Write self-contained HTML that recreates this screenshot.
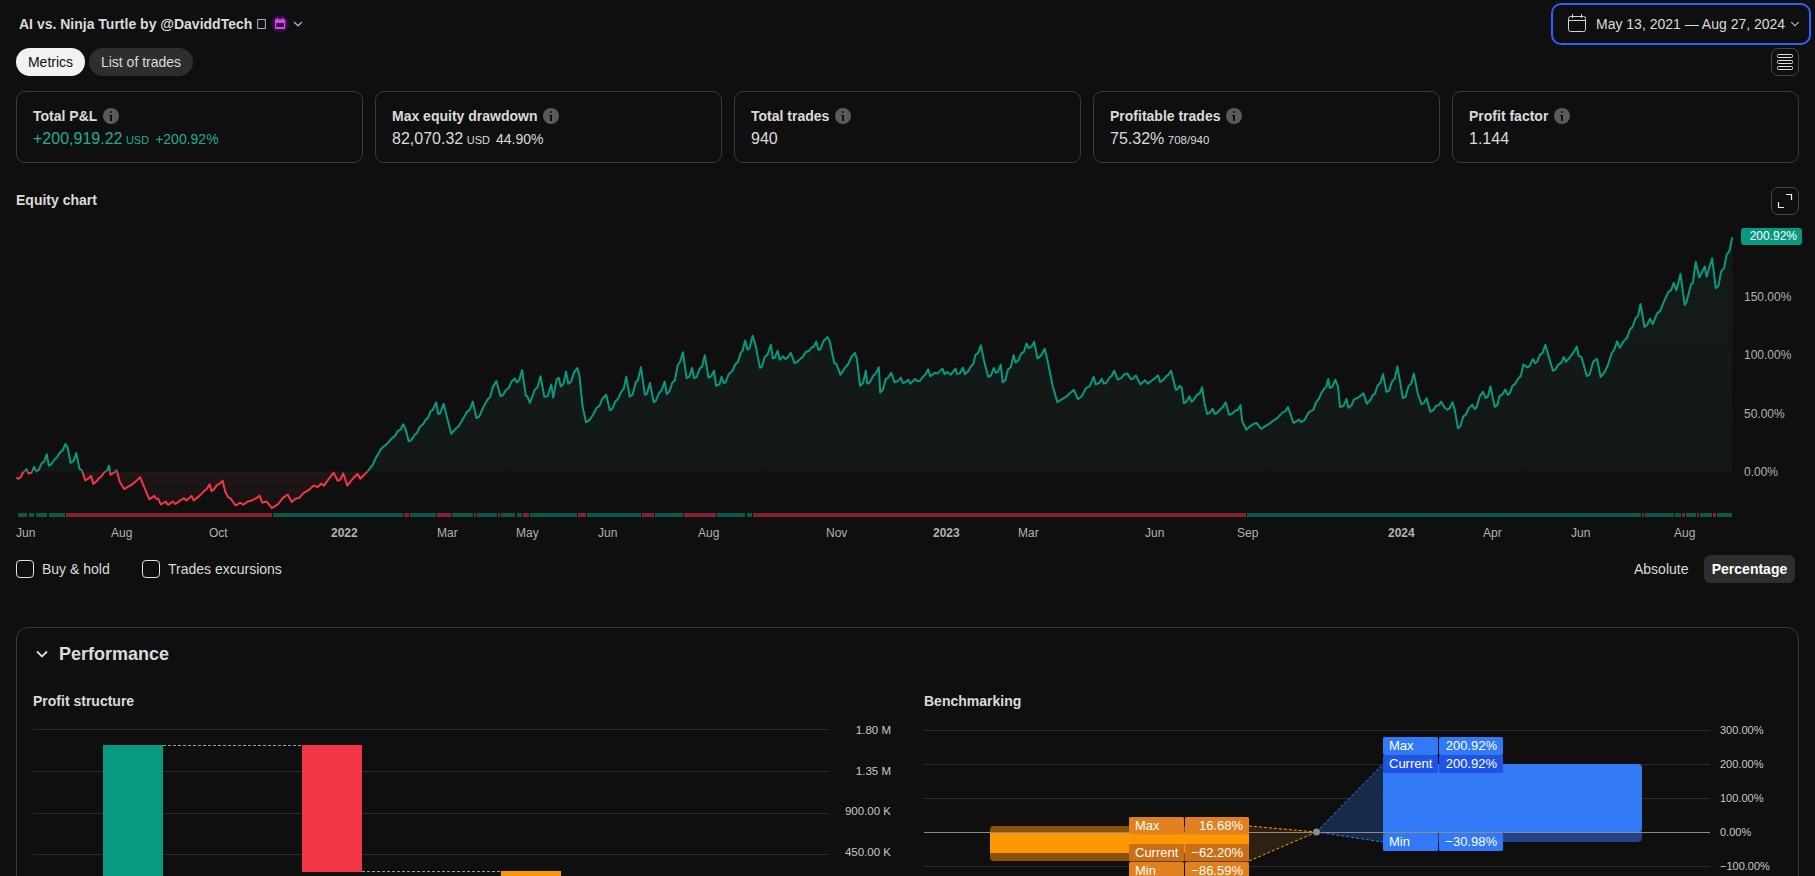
<!DOCTYPE html>
<html><head><meta charset="utf-8">
<style>
*{box-sizing:border-box;margin:0;padding:0}
html,body{width:1815px;height:876px;overflow:hidden;background:#0f0f0f;font-family:"Liberation Sans",sans-serif;color:#dbdbdb}
.a{position:absolute;white-space:nowrap}
.b{font-weight:700}
.card{position:absolute;top:91px;width:347px;height:72px;border:1px solid #3a3a3a;border-radius:9px}
.card .t{position:absolute;left:16px;top:16px;font-size:14px;font-weight:700;line-height:16px;color:#dbdbdb}
.card .i{position:absolute;right:-22px;top:0;width:16px;height:16px;border-radius:50%;background:linear-gradient(#111,#111) 6px 7px/1.2px 1px no-repeat,#5a5a5a}
.card .i:before{content:"";position:absolute;left:7px;top:3px;width:2px;height:2px;background:#111;border-radius:1px}
.card .i:after{content:"";position:absolute;left:7px;top:7px;width:2px;height:6px;background:#111}
.card .v{position:absolute;left:16px;top:38px;font-size:16px;line-height:18px;color:#dbdbdb}
.card .v small{font-size:11px;margin-left:3.5px}
.card .v .p{font-size:14px;margin-left:6px}
.ylab{position:absolute;left:1744px;margin-top:1px;font-size:12px;line-height:14px;color:#b2b2b2}
.xlab{position:absolute;top:526px;font-size:12px;line-height:14px;color:#b2b2b2}
.gl{position:absolute;height:1px;background:#2a2a2a}
</style></head><body>

<!-- header -->
<div class="a b" style="left:19px;top:15px;font-size:14px;line-height:18px;color:#dbdbdb">AI vs. Ninja Turtle by @DaviddTech</div>
<svg class="a" style="left:256px;top:18px" width="12" height="13"><rect x="1.7" y="1.5" width="7.6" height="9" fill="none" stroke="#c4c4c4" stroke-width="0.9"/></svg>
<div class="a" style="left:271px;top:15px;width:18px;height:18px;border-radius:50%;background:#2b1333"></div>
<svg class="a" style="left:274px;top:17px" width="12" height="13" viewBox="0 0 12 13"><rect x="2.6" y="0.8" width="1.3" height="2" fill="#e040fb"/><rect x="8" y="0.8" width="1.3" height="2" fill="#e040fb"/><rect x="0.9" y="2.2" width="10.4" height="9.8" rx="1.2" fill="#e040fb"/><rect x="2.3" y="6" width="7.6" height="4" fill="#2b1333"/></svg>
<svg class="a" style="left:293px;top:21px" width="10" height="6" viewBox="0 0 10 6"><path d="M1 1l4 3.8 4-3.8" fill="none" stroke="#b8b8b8" stroke-width="1.2"/></svg>

<!-- date range -->
<div class="a" style="left:1551px;top:3px;width:260px;height:42px;border:2px solid #2962ff;border-radius:10px"></div>
<svg class="a" style="left:1567px;top:13px" width="20" height="20" viewBox="0 0 20 20"><rect x="1.5" y="3.5" width="17" height="15" rx="2" fill="none" stroke="#d6d6d6" stroke-width="1"/><path d="M1.5 7.5h17M5.5 1v4M14.5 1v4" stroke="#d6d6d6" stroke-width="1"/></svg>
<div class="a" style="left:1596px;top:16px;font-size:14px;line-height:16px;color:#dbdbdb">May 13, 2021 — Aug 27, 2024</div>
<svg class="a" style="left:1789px;top:20px" width="12" height="8" viewBox="0 0 12 8"><path d="M2.3 2.2l3.7 3.6 3.7-3.6" fill="none" stroke="#c8c8c8" stroke-width="1.1"/></svg>

<!-- tabs -->
<div class="a" style="left:16px;top:48px;width:69px;height:28px;border-radius:14px;background:#f2f2f2;color:#0f0f0f;font-size:14px;line-height:28px;text-align:center">Metrics</div>
<div class="a" style="left:89px;top:48px;width:104px;height:28px;border-radius:14px;background:#2e2e2e;color:#dbdbdb;font-size:14px;line-height:28px;text-align:center">List of trades</div>

<!-- menu btn -->
<div class="a" style="left:1771px;top:48px;width:28px;height:28px;border:1px solid #474747;border-radius:7px"></div>
<svg class="a" style="left:1776px;top:53px" width="18" height="18" viewBox="0 0 18 18"><rect x="1.5" y="1.5" width="15" height="3" rx="1" fill="none" stroke="#e0e0e0" stroke-width="1"/><rect x="1.5" y="7.5" width="15" height="3" rx="1" fill="none" stroke="#e0e0e0" stroke-width="1"/><rect x="1.5" y="13.5" width="15" height="3" rx="1" fill="none" stroke="#e0e0e0" stroke-width="1"/></svg>

<!-- cards -->
<div class="card" style="left:16px"><div class="t">Total P&amp;L<div class="i"></div></div><div class="v" style="color:#22ab94">+200,919.22<small>USD</small><span class="p">+200.92%</span></div></div>
<div class="card" style="left:375px"><div class="t">Max equity drawdown<div class="i"></div></div><div class="v">82,070.32<small>USD</small><span class="p">44.90%</span></div></div>
<div class="card" style="left:734px"><div class="t">Total trades<div class="i"></div></div><div class="v">940</div></div>
<div class="card" style="left:1093px"><div class="t">Profitable trades<div class="i"></div></div><div class="v">75.32%<small style="font-size:11.5px">708/940</small></div></div>
<div class="card" style="left:1452px"><div class="t">Profit factor<div class="i"></div></div><div class="v">1.144</div></div>

<!-- equity chart -->
<div class="a b" style="left:16px;top:192px;font-size:14px;line-height:16px">Equity chart</div>
<div class="a" style="left:1771px;top:187px;width:28px;height:28px;border:1px solid #474747;border-radius:7px"></div>
<svg class="a" style="left:1771px;top:187px" width="28" height="28" viewBox="0 0 28 28"><path d="M15 7.5h5.5v5.5M7.5 15v5.5H13" fill="none" stroke="#f0f0f0" stroke-width="1.2"/></svg>

<svg width="1815" height="560" viewBox="0 0 1815 560" style="position:absolute;left:0;top:0">
<defs>
<linearGradient id="gg" x1="0" y1="237" x2="0" y2="471.5" gradientUnits="userSpaceOnUse"><stop offset="0" stop-color="#131b19"/><stop offset="1" stop-color="#121816"/></linearGradient>
<linearGradient id="gr" x1="0" y1="471.5" x2="0" y2="510" gradientUnits="userSpaceOnUse"><stop offset="0" stop-color="#1f1617"/><stop offset="1" stop-color="#171313"/></linearGradient>
<clipPath id="ca"><rect x="0" y="0" width="1740" height="471.5"/></clipPath>
<clipPath id="cb"><rect x="0" y="471.5" width="1740" height="100"/></clipPath>
</defs>
<path d="M16.3 477.6 L18.6 478.8 L20.8 477 L23.1 472.5 L26.6 469.1 L28.8 473.7 L31.7 472.5 L34 466.8 L36.3 471.4 L38.5 470.2 L42 462.8 L44.2 461.7 L46.8 454.2 L48.8 465.7 L51.1 464.5 L55.1 458.8 L56.8 457.7 L60.2 452 L62.5 450.8 L65.4 444 L67.6 447.4 L70.5 462.8 L73.4 461.1 L76.2 453.1 L79.6 469.1 L81.9 470.2 L85.3 480.5 L88.8 478.2 L91 475.9 L93.3 483.9 L96.8 481.1 L99 478.2 L101.3 476.5 L104.7 471.9 L107 470.8 L109.1 465.7 L110.5 474.8 L113.3 473.1 L116.7 470.2 L119.6 481.6 L124.2 489.1 L129.9 485.6 L132.1 484.5 L135.6 481.6 L140.1 477.1 L142.4 482.8 L149.3 499.3 L154.4 495.9 L156.1 498.8 L158.4 498.8 L160.7 504.5 L165.8 501.6 L168.1 505 L172.7 501.6 L175.5 503.9 L181.2 499.9 L184.1 498.2 L186.4 500.5 L191.5 495.9 L193.8 500.5 L199.5 495.9 L204.1 491.1 L206.8 489 L209.6 484.2 L211.6 491.1 L213.7 489.7 L217.1 484.9 L219.9 483.6 L222.6 480.8 L225.3 491.8 L228.1 497.3 L230.1 497.9 L235.6 505.5 L240.4 502.7 L243.2 504.8 L247.9 501.4 L251.4 500.7 L255.5 498.6 L259.6 495.9 L262.3 502.7 L266.4 501.4 L271.9 508.2 L278.1 504.1 L282.9 497.9 L287.7 494.5 L291.8 502.1 L295.9 498.6 L299.3 497.9 L303.4 493.2 L308.2 490.4 L313.7 485.6 L317.8 487 L321.2 483.6 L324 485.6 L328.8 478.8 L333.6 472.6 L337.7 480.8 L340.4 479.5 L343.2 473.3 L347.3 485.6 L352.1 479.5 L357.5 474 L360.3 478.8 L367.1 471.9 L372.6 465.1 L375.3 458.9 L380.8 449.3 L387 443.8 L392.5 437.7 L395 435.9 L397.7 431.1 L400.5 429.7 L403.2 424.2 L406 430.4 L408.7 441.4 L411.4 440 L414.9 434.5 L416.9 433.2 L419.7 427 L423.1 424.2 L425.8 419.5 L427.9 418.1 L430.6 411.2 L432.7 409.9 L436.1 402.3 L438.2 414 L440.2 413.3 L443.6 403.7 L446.4 414.7 L451.2 433.8 L455.3 429 L458.7 426.3 L463.5 418.1 L466.9 411.9 L469.7 409.9 L472.8 401.6 L476.5 418.1 L479.2 416.7 L482.7 408.5 L487.5 399.6 L490.2 396.8 L493 386.6 L496.4 381.1 L500.5 396.2 L503.2 394.8 L506 390 L508.7 388 L511.4 381.8 L514.9 378.4 L516.9 382.5 L519 380.4 L522.1 370.1 L525.8 395.5 L527.2 396.2 L529.9 403 L534.7 390 L537.5 387.3 L540.5 376.3 L544.3 396.8 L547.7 396.2 L551.2 384.5 L553.2 397.5 L556.6 379.7 L558.7 377.7 L560.8 386.6 L563.5 383.8 L566 371.5 L568.3 383.8 L571 381.8 L573.8 372.9 L577.2 368.1 L579.2 374.2 L582.7 407.1 L586.1 422.2 L589.5 420.1 L592.7 415.2 L596.8 407.7 L599.6 405.6 L602.3 398.8 L606.2 394.7 L609.9 410.4 L612.6 408.4 L615.3 401.5 L618.1 398.8 L621.5 391.2 L623.6 389.2 L626.3 376.8 L629.7 396.7 L632.5 394.7 L635.9 382.3 L637.9 380.3 L641 367.3 L644.8 394.7 L646.8 394 L649.9 383 L653.7 402.2 L655.8 400.8 L659.2 392.6 L661.2 391.2 L664.7 381.6 L666.7 394 L669.5 391.2 L672.2 383 L674.9 380.3 L677.7 365.2 L680.4 361.1 L682.9 352.2 L686.6 378.2 L689.3 376.8 L692.1 367.9 L694.1 378.2 L696.8 376.8 L699.6 368.6 L702.1 366.6 L704.8 355.3 L708.5 377.5 L711.2 376.2 L714 370.7 L716 385.8 L719.5 384.4 L721.5 376.8 L723.6 383 L725.6 382.3 L728.4 374.8 L732.5 370.7 L735.2 364.5 L738 361.8 L740.7 352.9 L742.7 350.8 L745.1 340.5 L747.5 349.5 L749.6 348.1 L752.6 335.8 L755.8 346 L759.9 367.9 L761.9 366.6 L764.7 357 L767.4 354.9 L770.8 344.7 L772.9 358.4 L774.9 357.7 L777.7 350.8 L779.7 359.7 L783.2 356.3 L785.2 359 L787.7 357.7 L790.8 352.9 L794.6 363.2 L797.3 361.8 L800.8 358.4 L802.8 357 L805.5 352.2 L809 350.8 L811.7 347.4 L813.8 346.7 L816.2 341.6 L818.6 350.1 L820.6 348.8 L823.4 341.2 L827.5 337.1 L829.5 340.5 L834.3 363.2 L836.4 363.8 L840.5 374.8 L845.3 367.3 L848 364.5 L851.4 357 L854.9 352.9 L856.9 359 L860.1 385.8 L863.1 383 L865.8 370.7 L867.2 383.7 L869.9 382.3 L873.4 375.5 L875.4 374.1 L878.8 367.3 L880.2 392.6 L882.9 389.9 L885.7 378.9 L887.7 378.2 L891.2 372.7 L894.6 382.3 L898 381 L900.8 377.5 L902.8 383 L905.5 382.3 L908.3 379.6 L910.3 383.7 L915.1 378.9 L917.2 381 L919.9 381 L923.4 376.2 L925.4 374.8 L928.2 369.3 L930.2 376.2 L935 372.7 L937.7 373.4 L942.5 368.6 L944.6 374.1 L947.3 372.1 L950.8 374.8 L955.5 368.6 L956.9 374.1 L959.7 373.4 L962.8 367.7 L965.1 374.1 L968.6 370.7 L970.6 366.6 L973.4 363.8 L975.4 354.9 L978.2 352.9 L980.9 345.3 L984.1 361.1 L988.2 376.8 L991 375.5 L993.7 368 L995.8 372.7 L997.8 372.1 L1000.8 364.5 L1002.6 382.3 L1005.3 380.3 L1008.1 369.3 L1010.8 367.3 L1013.6 354.9 L1015.6 362.5 L1018.4 360.4 L1021.1 353.6 L1023.8 352.2 L1026.6 343.6 L1028.6 348.1 L1031.4 346.7 L1034.1 341.9 L1037.5 358.4 L1041 355.6 L1044.7 348.8 L1047.1 358.4 L1052.6 385.8 L1057.4 402.2 L1063.6 398.1 L1066.3 396.7 L1069 394 L1073.8 389.9 L1077.9 399.2 L1081.4 396.7 L1086.2 387.8 L1089.6 386.4 L1093.7 376.8 L1095.8 384.4 L1099.2 383 L1101.6 378.9 L1104 383.7 L1106.7 382.3 L1109.5 377.5 L1111.5 376.2 L1114.2 370.7 L1117.7 379.6 L1121.1 378.2 L1123.8 374.8 L1127.3 373.4 L1130.7 378.9 L1132.7 378.9 L1135.9 375.5 L1140.3 384.4 L1145.1 380.3 L1147.8 383.7 L1151.2 381 L1154 378.9 L1158.1 375.5 L1160.1 382.3 L1163.6 379.6 L1166.3 376.2 L1168.4 374.8 L1171.1 370.7 L1175.9 389.9 L1177.1 389.3 L1179.8 385.9 L1181.8 387.9 L1183.9 403 L1186.6 401.6 L1189.4 396.2 L1191.4 401.6 L1193.5 400.3 L1196.9 394.8 L1199.7 393.4 L1202.1 387.3 L1204.5 403 L1207.2 414 L1209.9 412.6 L1212.7 408.5 L1214.7 414 L1217.5 412.6 L1220.9 408.5 L1222.9 407.1 L1225.7 402.3 L1229.1 414.7 L1231.8 414 L1235.3 410.5 L1238 409.9 L1240.5 405.1 L1242.1 420.8 L1246.2 429.7 L1251.7 424.9 L1256.5 422.9 L1261.3 429 L1266.1 425.6 L1269.5 423.6 L1273 420.8 L1277.1 418.1 L1282.5 412.6 L1285.3 411.2 L1288 407.1 L1290.8 415.3 L1293.5 422.9 L1296.2 421.5 L1299 419.5 L1301 422.2 L1304.5 420.1 L1308.6 412.6 L1310.6 411.2 L1313.4 409.9 L1316.1 402.3 L1318.8 398.9 L1321.6 392.7 L1324.3 388.6 L1326.4 386.6 L1328.2 379 L1329.8 387.9 L1332.5 386.6 L1335.3 379.7 L1338 386.6 L1340.1 407.1 L1343.5 405.8 L1346.5 398.9 L1348.3 407.8 L1351.7 405.1 L1353.8 399.6 L1357.2 398.2 L1359.9 396.2 L1363.4 393.4 L1366.8 403.7 L1370.2 400.3 L1372.7 395.3 L1374.8 394 L1377.5 385.8 L1380.3 383 L1383 374.1 L1386.4 391.9 L1389.2 390.5 L1391.9 381.6 L1394.7 378.9 L1397.4 366.6 L1402.9 398.1 L1405.6 396.7 L1408.4 386.4 L1411.1 383.7 L1413.8 373.4 L1417.9 394 L1421.4 404.2 L1424.1 402.9 L1426.6 398.1 L1430.3 411.8 L1433 410.4 L1436.4 405.6 L1439.2 404.9 L1441.2 401.5 L1444.7 407.7 L1447.4 409.7 L1449.5 408.4 L1452.5 402.2 L1454.9 410.4 L1457.9 428.2 L1460.4 426.2 L1463.2 416.6 L1465.9 414.5 L1468.6 408.4 L1472.1 404.9 L1474.8 409 L1476.8 407 L1479.6 396.7 L1483 391.9 L1485.8 398.1 L1487.8 396.7 L1490.5 386.4 L1494.7 407 L1497.4 404.9 L1499.5 396 L1502.2 394.7 L1505.3 389.6 L1507.7 394.7 L1509.7 393.3 L1512.5 385.8 L1515.2 383.7 L1517.9 378.9 L1520.7 376.2 L1523.4 364.5 L1527.5 367.3 L1529.6 365.9 L1533 359 L1535.1 363.2 L1537.1 361.8 L1539.9 354.9 L1542.6 352.9 L1545.3 344.7 L1552.9 370.7 L1555.6 369.3 L1558.4 364.5 L1561.1 363.2 L1563.8 357 L1565.9 361.8 L1568.7 358.8 L1572.3 354.2 L1576.9 346.5 L1578.7 356 L1581.4 356.9 L1586.9 376.1 L1589.7 374.3 L1593.3 361.5 L1597 358.8 L1600.6 377 L1604.3 372.5 L1607.9 365.2 L1611.6 353.3 L1614.3 349.6 L1617.1 341.4 L1619.8 347.8 L1623.5 341.4 L1627.1 337.8 L1629.9 329.5 L1632.6 326.8 L1635.4 318.6 L1638.1 315.8 L1640.5 304 L1644.5 326.8 L1647.2 325 L1650 318.6 L1652.7 324.1 L1657.3 313.1 L1660 311.3 L1663.7 302.1 L1668.3 292.1 L1671 290.3 L1673.7 283 L1676.5 290.3 L1680.5 273.8 L1684.7 304.9 L1686.5 302.1 L1691.1 283.9 L1692.9 283 L1695.7 262 L1699.3 277.5 L1704.8 266.5 L1706.6 276.6 L1712.1 258.3 L1715.8 288.1 L1718.5 285.7 L1721.2 271.1 L1724 268.4 L1726.7 254.7 L1729.5 251 L1732.2 237.3 L1732.2 471.5 L16.3 471.5 Z" fill="url(#gg)" clip-path="url(#ca)"/>
<path d="M16.3 477.6 L18.6 478.8 L20.8 477 L23.1 472.5 L26.6 469.1 L28.8 473.7 L31.7 472.5 L34 466.8 L36.3 471.4 L38.5 470.2 L42 462.8 L44.2 461.7 L46.8 454.2 L48.8 465.7 L51.1 464.5 L55.1 458.8 L56.8 457.7 L60.2 452 L62.5 450.8 L65.4 444 L67.6 447.4 L70.5 462.8 L73.4 461.1 L76.2 453.1 L79.6 469.1 L81.9 470.2 L85.3 480.5 L88.8 478.2 L91 475.9 L93.3 483.9 L96.8 481.1 L99 478.2 L101.3 476.5 L104.7 471.9 L107 470.8 L109.1 465.7 L110.5 474.8 L113.3 473.1 L116.7 470.2 L119.6 481.6 L124.2 489.1 L129.9 485.6 L132.1 484.5 L135.6 481.6 L140.1 477.1 L142.4 482.8 L149.3 499.3 L154.4 495.9 L156.1 498.8 L158.4 498.8 L160.7 504.5 L165.8 501.6 L168.1 505 L172.7 501.6 L175.5 503.9 L181.2 499.9 L184.1 498.2 L186.4 500.5 L191.5 495.9 L193.8 500.5 L199.5 495.9 L204.1 491.1 L206.8 489 L209.6 484.2 L211.6 491.1 L213.7 489.7 L217.1 484.9 L219.9 483.6 L222.6 480.8 L225.3 491.8 L228.1 497.3 L230.1 497.9 L235.6 505.5 L240.4 502.7 L243.2 504.8 L247.9 501.4 L251.4 500.7 L255.5 498.6 L259.6 495.9 L262.3 502.7 L266.4 501.4 L271.9 508.2 L278.1 504.1 L282.9 497.9 L287.7 494.5 L291.8 502.1 L295.9 498.6 L299.3 497.9 L303.4 493.2 L308.2 490.4 L313.7 485.6 L317.8 487 L321.2 483.6 L324 485.6 L328.8 478.8 L333.6 472.6 L337.7 480.8 L340.4 479.5 L343.2 473.3 L347.3 485.6 L352.1 479.5 L357.5 474 L360.3 478.8 L367.1 471.9 L372.6 465.1 L375.3 458.9 L380.8 449.3 L387 443.8 L392.5 437.7 L395 435.9 L397.7 431.1 L400.5 429.7 L403.2 424.2 L406 430.4 L408.7 441.4 L411.4 440 L414.9 434.5 L416.9 433.2 L419.7 427 L423.1 424.2 L425.8 419.5 L427.9 418.1 L430.6 411.2 L432.7 409.9 L436.1 402.3 L438.2 414 L440.2 413.3 L443.6 403.7 L446.4 414.7 L451.2 433.8 L455.3 429 L458.7 426.3 L463.5 418.1 L466.9 411.9 L469.7 409.9 L472.8 401.6 L476.5 418.1 L479.2 416.7 L482.7 408.5 L487.5 399.6 L490.2 396.8 L493 386.6 L496.4 381.1 L500.5 396.2 L503.2 394.8 L506 390 L508.7 388 L511.4 381.8 L514.9 378.4 L516.9 382.5 L519 380.4 L522.1 370.1 L525.8 395.5 L527.2 396.2 L529.9 403 L534.7 390 L537.5 387.3 L540.5 376.3 L544.3 396.8 L547.7 396.2 L551.2 384.5 L553.2 397.5 L556.6 379.7 L558.7 377.7 L560.8 386.6 L563.5 383.8 L566 371.5 L568.3 383.8 L571 381.8 L573.8 372.9 L577.2 368.1 L579.2 374.2 L582.7 407.1 L586.1 422.2 L589.5 420.1 L592.7 415.2 L596.8 407.7 L599.6 405.6 L602.3 398.8 L606.2 394.7 L609.9 410.4 L612.6 408.4 L615.3 401.5 L618.1 398.8 L621.5 391.2 L623.6 389.2 L626.3 376.8 L629.7 396.7 L632.5 394.7 L635.9 382.3 L637.9 380.3 L641 367.3 L644.8 394.7 L646.8 394 L649.9 383 L653.7 402.2 L655.8 400.8 L659.2 392.6 L661.2 391.2 L664.7 381.6 L666.7 394 L669.5 391.2 L672.2 383 L674.9 380.3 L677.7 365.2 L680.4 361.1 L682.9 352.2 L686.6 378.2 L689.3 376.8 L692.1 367.9 L694.1 378.2 L696.8 376.8 L699.6 368.6 L702.1 366.6 L704.8 355.3 L708.5 377.5 L711.2 376.2 L714 370.7 L716 385.8 L719.5 384.4 L721.5 376.8 L723.6 383 L725.6 382.3 L728.4 374.8 L732.5 370.7 L735.2 364.5 L738 361.8 L740.7 352.9 L742.7 350.8 L745.1 340.5 L747.5 349.5 L749.6 348.1 L752.6 335.8 L755.8 346 L759.9 367.9 L761.9 366.6 L764.7 357 L767.4 354.9 L770.8 344.7 L772.9 358.4 L774.9 357.7 L777.7 350.8 L779.7 359.7 L783.2 356.3 L785.2 359 L787.7 357.7 L790.8 352.9 L794.6 363.2 L797.3 361.8 L800.8 358.4 L802.8 357 L805.5 352.2 L809 350.8 L811.7 347.4 L813.8 346.7 L816.2 341.6 L818.6 350.1 L820.6 348.8 L823.4 341.2 L827.5 337.1 L829.5 340.5 L834.3 363.2 L836.4 363.8 L840.5 374.8 L845.3 367.3 L848 364.5 L851.4 357 L854.9 352.9 L856.9 359 L860.1 385.8 L863.1 383 L865.8 370.7 L867.2 383.7 L869.9 382.3 L873.4 375.5 L875.4 374.1 L878.8 367.3 L880.2 392.6 L882.9 389.9 L885.7 378.9 L887.7 378.2 L891.2 372.7 L894.6 382.3 L898 381 L900.8 377.5 L902.8 383 L905.5 382.3 L908.3 379.6 L910.3 383.7 L915.1 378.9 L917.2 381 L919.9 381 L923.4 376.2 L925.4 374.8 L928.2 369.3 L930.2 376.2 L935 372.7 L937.7 373.4 L942.5 368.6 L944.6 374.1 L947.3 372.1 L950.8 374.8 L955.5 368.6 L956.9 374.1 L959.7 373.4 L962.8 367.7 L965.1 374.1 L968.6 370.7 L970.6 366.6 L973.4 363.8 L975.4 354.9 L978.2 352.9 L980.9 345.3 L984.1 361.1 L988.2 376.8 L991 375.5 L993.7 368 L995.8 372.7 L997.8 372.1 L1000.8 364.5 L1002.6 382.3 L1005.3 380.3 L1008.1 369.3 L1010.8 367.3 L1013.6 354.9 L1015.6 362.5 L1018.4 360.4 L1021.1 353.6 L1023.8 352.2 L1026.6 343.6 L1028.6 348.1 L1031.4 346.7 L1034.1 341.9 L1037.5 358.4 L1041 355.6 L1044.7 348.8 L1047.1 358.4 L1052.6 385.8 L1057.4 402.2 L1063.6 398.1 L1066.3 396.7 L1069 394 L1073.8 389.9 L1077.9 399.2 L1081.4 396.7 L1086.2 387.8 L1089.6 386.4 L1093.7 376.8 L1095.8 384.4 L1099.2 383 L1101.6 378.9 L1104 383.7 L1106.7 382.3 L1109.5 377.5 L1111.5 376.2 L1114.2 370.7 L1117.7 379.6 L1121.1 378.2 L1123.8 374.8 L1127.3 373.4 L1130.7 378.9 L1132.7 378.9 L1135.9 375.5 L1140.3 384.4 L1145.1 380.3 L1147.8 383.7 L1151.2 381 L1154 378.9 L1158.1 375.5 L1160.1 382.3 L1163.6 379.6 L1166.3 376.2 L1168.4 374.8 L1171.1 370.7 L1175.9 389.9 L1177.1 389.3 L1179.8 385.9 L1181.8 387.9 L1183.9 403 L1186.6 401.6 L1189.4 396.2 L1191.4 401.6 L1193.5 400.3 L1196.9 394.8 L1199.7 393.4 L1202.1 387.3 L1204.5 403 L1207.2 414 L1209.9 412.6 L1212.7 408.5 L1214.7 414 L1217.5 412.6 L1220.9 408.5 L1222.9 407.1 L1225.7 402.3 L1229.1 414.7 L1231.8 414 L1235.3 410.5 L1238 409.9 L1240.5 405.1 L1242.1 420.8 L1246.2 429.7 L1251.7 424.9 L1256.5 422.9 L1261.3 429 L1266.1 425.6 L1269.5 423.6 L1273 420.8 L1277.1 418.1 L1282.5 412.6 L1285.3 411.2 L1288 407.1 L1290.8 415.3 L1293.5 422.9 L1296.2 421.5 L1299 419.5 L1301 422.2 L1304.5 420.1 L1308.6 412.6 L1310.6 411.2 L1313.4 409.9 L1316.1 402.3 L1318.8 398.9 L1321.6 392.7 L1324.3 388.6 L1326.4 386.6 L1328.2 379 L1329.8 387.9 L1332.5 386.6 L1335.3 379.7 L1338 386.6 L1340.1 407.1 L1343.5 405.8 L1346.5 398.9 L1348.3 407.8 L1351.7 405.1 L1353.8 399.6 L1357.2 398.2 L1359.9 396.2 L1363.4 393.4 L1366.8 403.7 L1370.2 400.3 L1372.7 395.3 L1374.8 394 L1377.5 385.8 L1380.3 383 L1383 374.1 L1386.4 391.9 L1389.2 390.5 L1391.9 381.6 L1394.7 378.9 L1397.4 366.6 L1402.9 398.1 L1405.6 396.7 L1408.4 386.4 L1411.1 383.7 L1413.8 373.4 L1417.9 394 L1421.4 404.2 L1424.1 402.9 L1426.6 398.1 L1430.3 411.8 L1433 410.4 L1436.4 405.6 L1439.2 404.9 L1441.2 401.5 L1444.7 407.7 L1447.4 409.7 L1449.5 408.4 L1452.5 402.2 L1454.9 410.4 L1457.9 428.2 L1460.4 426.2 L1463.2 416.6 L1465.9 414.5 L1468.6 408.4 L1472.1 404.9 L1474.8 409 L1476.8 407 L1479.6 396.7 L1483 391.9 L1485.8 398.1 L1487.8 396.7 L1490.5 386.4 L1494.7 407 L1497.4 404.9 L1499.5 396 L1502.2 394.7 L1505.3 389.6 L1507.7 394.7 L1509.7 393.3 L1512.5 385.8 L1515.2 383.7 L1517.9 378.9 L1520.7 376.2 L1523.4 364.5 L1527.5 367.3 L1529.6 365.9 L1533 359 L1535.1 363.2 L1537.1 361.8 L1539.9 354.9 L1542.6 352.9 L1545.3 344.7 L1552.9 370.7 L1555.6 369.3 L1558.4 364.5 L1561.1 363.2 L1563.8 357 L1565.9 361.8 L1568.7 358.8 L1572.3 354.2 L1576.9 346.5 L1578.7 356 L1581.4 356.9 L1586.9 376.1 L1589.7 374.3 L1593.3 361.5 L1597 358.8 L1600.6 377 L1604.3 372.5 L1607.9 365.2 L1611.6 353.3 L1614.3 349.6 L1617.1 341.4 L1619.8 347.8 L1623.5 341.4 L1627.1 337.8 L1629.9 329.5 L1632.6 326.8 L1635.4 318.6 L1638.1 315.8 L1640.5 304 L1644.5 326.8 L1647.2 325 L1650 318.6 L1652.7 324.1 L1657.3 313.1 L1660 311.3 L1663.7 302.1 L1668.3 292.1 L1671 290.3 L1673.7 283 L1676.5 290.3 L1680.5 273.8 L1684.7 304.9 L1686.5 302.1 L1691.1 283.9 L1692.9 283 L1695.7 262 L1699.3 277.5 L1704.8 266.5 L1706.6 276.6 L1712.1 258.3 L1715.8 288.1 L1718.5 285.7 L1721.2 271.1 L1724 268.4 L1726.7 254.7 L1729.5 251 L1732.2 237.3 L1732.2 471.5 L16.3 471.5 Z" fill="url(#gr)" clip-path="url(#cb)"/>
<path d="M16.3 477.6 L18.6 478.8 L20.8 477 L23.1 472.5 L26.6 469.1 L28.8 473.7 L31.7 472.5 L34 466.8 L36.3 471.4 L38.5 470.2 L42 462.8 L44.2 461.7 L46.8 454.2 L48.8 465.7 L51.1 464.5 L55.1 458.8 L56.8 457.7 L60.2 452 L62.5 450.8 L65.4 444 L67.6 447.4 L70.5 462.8 L73.4 461.1 L76.2 453.1 L79.6 469.1 L81.9 470.2 L85.3 480.5 L88.8 478.2 L91 475.9 L93.3 483.9 L96.8 481.1 L99 478.2 L101.3 476.5 L104.7 471.9 L107 470.8 L109.1 465.7 L110.5 474.8 L113.3 473.1 L116.7 470.2 L119.6 481.6 L124.2 489.1 L129.9 485.6 L132.1 484.5 L135.6 481.6 L140.1 477.1 L142.4 482.8 L149.3 499.3 L154.4 495.9 L156.1 498.8 L158.4 498.8 L160.7 504.5 L165.8 501.6 L168.1 505 L172.7 501.6 L175.5 503.9 L181.2 499.9 L184.1 498.2 L186.4 500.5 L191.5 495.9 L193.8 500.5 L199.5 495.9 L204.1 491.1 L206.8 489 L209.6 484.2 L211.6 491.1 L213.7 489.7 L217.1 484.9 L219.9 483.6 L222.6 480.8 L225.3 491.8 L228.1 497.3 L230.1 497.9 L235.6 505.5 L240.4 502.7 L243.2 504.8 L247.9 501.4 L251.4 500.7 L255.5 498.6 L259.6 495.9 L262.3 502.7 L266.4 501.4 L271.9 508.2 L278.1 504.1 L282.9 497.9 L287.7 494.5 L291.8 502.1 L295.9 498.6 L299.3 497.9 L303.4 493.2 L308.2 490.4 L313.7 485.6 L317.8 487 L321.2 483.6 L324 485.6 L328.8 478.8 L333.6 472.6 L337.7 480.8 L340.4 479.5 L343.2 473.3 L347.3 485.6 L352.1 479.5 L357.5 474 L360.3 478.8 L367.1 471.9 L372.6 465.1 L375.3 458.9 L380.8 449.3 L387 443.8 L392.5 437.7 L395 435.9 L397.7 431.1 L400.5 429.7 L403.2 424.2 L406 430.4 L408.7 441.4 L411.4 440 L414.9 434.5 L416.9 433.2 L419.7 427 L423.1 424.2 L425.8 419.5 L427.9 418.1 L430.6 411.2 L432.7 409.9 L436.1 402.3 L438.2 414 L440.2 413.3 L443.6 403.7 L446.4 414.7 L451.2 433.8 L455.3 429 L458.7 426.3 L463.5 418.1 L466.9 411.9 L469.7 409.9 L472.8 401.6 L476.5 418.1 L479.2 416.7 L482.7 408.5 L487.5 399.6 L490.2 396.8 L493 386.6 L496.4 381.1 L500.5 396.2 L503.2 394.8 L506 390 L508.7 388 L511.4 381.8 L514.9 378.4 L516.9 382.5 L519 380.4 L522.1 370.1 L525.8 395.5 L527.2 396.2 L529.9 403 L534.7 390 L537.5 387.3 L540.5 376.3 L544.3 396.8 L547.7 396.2 L551.2 384.5 L553.2 397.5 L556.6 379.7 L558.7 377.7 L560.8 386.6 L563.5 383.8 L566 371.5 L568.3 383.8 L571 381.8 L573.8 372.9 L577.2 368.1 L579.2 374.2 L582.7 407.1 L586.1 422.2 L589.5 420.1 L592.7 415.2 L596.8 407.7 L599.6 405.6 L602.3 398.8 L606.2 394.7 L609.9 410.4 L612.6 408.4 L615.3 401.5 L618.1 398.8 L621.5 391.2 L623.6 389.2 L626.3 376.8 L629.7 396.7 L632.5 394.7 L635.9 382.3 L637.9 380.3 L641 367.3 L644.8 394.7 L646.8 394 L649.9 383 L653.7 402.2 L655.8 400.8 L659.2 392.6 L661.2 391.2 L664.7 381.6 L666.7 394 L669.5 391.2 L672.2 383 L674.9 380.3 L677.7 365.2 L680.4 361.1 L682.9 352.2 L686.6 378.2 L689.3 376.8 L692.1 367.9 L694.1 378.2 L696.8 376.8 L699.6 368.6 L702.1 366.6 L704.8 355.3 L708.5 377.5 L711.2 376.2 L714 370.7 L716 385.8 L719.5 384.4 L721.5 376.8 L723.6 383 L725.6 382.3 L728.4 374.8 L732.5 370.7 L735.2 364.5 L738 361.8 L740.7 352.9 L742.7 350.8 L745.1 340.5 L747.5 349.5 L749.6 348.1 L752.6 335.8 L755.8 346 L759.9 367.9 L761.9 366.6 L764.7 357 L767.4 354.9 L770.8 344.7 L772.9 358.4 L774.9 357.7 L777.7 350.8 L779.7 359.7 L783.2 356.3 L785.2 359 L787.7 357.7 L790.8 352.9 L794.6 363.2 L797.3 361.8 L800.8 358.4 L802.8 357 L805.5 352.2 L809 350.8 L811.7 347.4 L813.8 346.7 L816.2 341.6 L818.6 350.1 L820.6 348.8 L823.4 341.2 L827.5 337.1 L829.5 340.5 L834.3 363.2 L836.4 363.8 L840.5 374.8 L845.3 367.3 L848 364.5 L851.4 357 L854.9 352.9 L856.9 359 L860.1 385.8 L863.1 383 L865.8 370.7 L867.2 383.7 L869.9 382.3 L873.4 375.5 L875.4 374.1 L878.8 367.3 L880.2 392.6 L882.9 389.9 L885.7 378.9 L887.7 378.2 L891.2 372.7 L894.6 382.3 L898 381 L900.8 377.5 L902.8 383 L905.5 382.3 L908.3 379.6 L910.3 383.7 L915.1 378.9 L917.2 381 L919.9 381 L923.4 376.2 L925.4 374.8 L928.2 369.3 L930.2 376.2 L935 372.7 L937.7 373.4 L942.5 368.6 L944.6 374.1 L947.3 372.1 L950.8 374.8 L955.5 368.6 L956.9 374.1 L959.7 373.4 L962.8 367.7 L965.1 374.1 L968.6 370.7 L970.6 366.6 L973.4 363.8 L975.4 354.9 L978.2 352.9 L980.9 345.3 L984.1 361.1 L988.2 376.8 L991 375.5 L993.7 368 L995.8 372.7 L997.8 372.1 L1000.8 364.5 L1002.6 382.3 L1005.3 380.3 L1008.1 369.3 L1010.8 367.3 L1013.6 354.9 L1015.6 362.5 L1018.4 360.4 L1021.1 353.6 L1023.8 352.2 L1026.6 343.6 L1028.6 348.1 L1031.4 346.7 L1034.1 341.9 L1037.5 358.4 L1041 355.6 L1044.7 348.8 L1047.1 358.4 L1052.6 385.8 L1057.4 402.2 L1063.6 398.1 L1066.3 396.7 L1069 394 L1073.8 389.9 L1077.9 399.2 L1081.4 396.7 L1086.2 387.8 L1089.6 386.4 L1093.7 376.8 L1095.8 384.4 L1099.2 383 L1101.6 378.9 L1104 383.7 L1106.7 382.3 L1109.5 377.5 L1111.5 376.2 L1114.2 370.7 L1117.7 379.6 L1121.1 378.2 L1123.8 374.8 L1127.3 373.4 L1130.7 378.9 L1132.7 378.9 L1135.9 375.5 L1140.3 384.4 L1145.1 380.3 L1147.8 383.7 L1151.2 381 L1154 378.9 L1158.1 375.5 L1160.1 382.3 L1163.6 379.6 L1166.3 376.2 L1168.4 374.8 L1171.1 370.7 L1175.9 389.9 L1177.1 389.3 L1179.8 385.9 L1181.8 387.9 L1183.9 403 L1186.6 401.6 L1189.4 396.2 L1191.4 401.6 L1193.5 400.3 L1196.9 394.8 L1199.7 393.4 L1202.1 387.3 L1204.5 403 L1207.2 414 L1209.9 412.6 L1212.7 408.5 L1214.7 414 L1217.5 412.6 L1220.9 408.5 L1222.9 407.1 L1225.7 402.3 L1229.1 414.7 L1231.8 414 L1235.3 410.5 L1238 409.9 L1240.5 405.1 L1242.1 420.8 L1246.2 429.7 L1251.7 424.9 L1256.5 422.9 L1261.3 429 L1266.1 425.6 L1269.5 423.6 L1273 420.8 L1277.1 418.1 L1282.5 412.6 L1285.3 411.2 L1288 407.1 L1290.8 415.3 L1293.5 422.9 L1296.2 421.5 L1299 419.5 L1301 422.2 L1304.5 420.1 L1308.6 412.6 L1310.6 411.2 L1313.4 409.9 L1316.1 402.3 L1318.8 398.9 L1321.6 392.7 L1324.3 388.6 L1326.4 386.6 L1328.2 379 L1329.8 387.9 L1332.5 386.6 L1335.3 379.7 L1338 386.6 L1340.1 407.1 L1343.5 405.8 L1346.5 398.9 L1348.3 407.8 L1351.7 405.1 L1353.8 399.6 L1357.2 398.2 L1359.9 396.2 L1363.4 393.4 L1366.8 403.7 L1370.2 400.3 L1372.7 395.3 L1374.8 394 L1377.5 385.8 L1380.3 383 L1383 374.1 L1386.4 391.9 L1389.2 390.5 L1391.9 381.6 L1394.7 378.9 L1397.4 366.6 L1402.9 398.1 L1405.6 396.7 L1408.4 386.4 L1411.1 383.7 L1413.8 373.4 L1417.9 394 L1421.4 404.2 L1424.1 402.9 L1426.6 398.1 L1430.3 411.8 L1433 410.4 L1436.4 405.6 L1439.2 404.9 L1441.2 401.5 L1444.7 407.7 L1447.4 409.7 L1449.5 408.4 L1452.5 402.2 L1454.9 410.4 L1457.9 428.2 L1460.4 426.2 L1463.2 416.6 L1465.9 414.5 L1468.6 408.4 L1472.1 404.9 L1474.8 409 L1476.8 407 L1479.6 396.7 L1483 391.9 L1485.8 398.1 L1487.8 396.7 L1490.5 386.4 L1494.7 407 L1497.4 404.9 L1499.5 396 L1502.2 394.7 L1505.3 389.6 L1507.7 394.7 L1509.7 393.3 L1512.5 385.8 L1515.2 383.7 L1517.9 378.9 L1520.7 376.2 L1523.4 364.5 L1527.5 367.3 L1529.6 365.9 L1533 359 L1535.1 363.2 L1537.1 361.8 L1539.9 354.9 L1542.6 352.9 L1545.3 344.7 L1552.9 370.7 L1555.6 369.3 L1558.4 364.5 L1561.1 363.2 L1563.8 357 L1565.9 361.8 L1568.7 358.8 L1572.3 354.2 L1576.9 346.5 L1578.7 356 L1581.4 356.9 L1586.9 376.1 L1589.7 374.3 L1593.3 361.5 L1597 358.8 L1600.6 377 L1604.3 372.5 L1607.9 365.2 L1611.6 353.3 L1614.3 349.6 L1617.1 341.4 L1619.8 347.8 L1623.5 341.4 L1627.1 337.8 L1629.9 329.5 L1632.6 326.8 L1635.4 318.6 L1638.1 315.8 L1640.5 304 L1644.5 326.8 L1647.2 325 L1650 318.6 L1652.7 324.1 L1657.3 313.1 L1660 311.3 L1663.7 302.1 L1668.3 292.1 L1671 290.3 L1673.7 283 L1676.5 290.3 L1680.5 273.8 L1684.7 304.9 L1686.5 302.1 L1691.1 283.9 L1692.9 283 L1695.7 262 L1699.3 277.5 L1704.8 266.5 L1706.6 276.6 L1712.1 258.3 L1715.8 288.1 L1718.5 285.7 L1721.2 271.1 L1724 268.4 L1726.7 254.7 L1729.5 251 L1732.2 237.3" fill="none" stroke="#089981" stroke-width="2" stroke-linejoin="round" clip-path="url(#ca)"/>
<path d="M16.3 477.6 L18.6 478.8 L20.8 477 L23.1 472.5 L26.6 469.1 L28.8 473.7 L31.7 472.5 L34 466.8 L36.3 471.4 L38.5 470.2 L42 462.8 L44.2 461.7 L46.8 454.2 L48.8 465.7 L51.1 464.5 L55.1 458.8 L56.8 457.7 L60.2 452 L62.5 450.8 L65.4 444 L67.6 447.4 L70.5 462.8 L73.4 461.1 L76.2 453.1 L79.6 469.1 L81.9 470.2 L85.3 480.5 L88.8 478.2 L91 475.9 L93.3 483.9 L96.8 481.1 L99 478.2 L101.3 476.5 L104.7 471.9 L107 470.8 L109.1 465.7 L110.5 474.8 L113.3 473.1 L116.7 470.2 L119.6 481.6 L124.2 489.1 L129.9 485.6 L132.1 484.5 L135.6 481.6 L140.1 477.1 L142.4 482.8 L149.3 499.3 L154.4 495.9 L156.1 498.8 L158.4 498.8 L160.7 504.5 L165.8 501.6 L168.1 505 L172.7 501.6 L175.5 503.9 L181.2 499.9 L184.1 498.2 L186.4 500.5 L191.5 495.9 L193.8 500.5 L199.5 495.9 L204.1 491.1 L206.8 489 L209.6 484.2 L211.6 491.1 L213.7 489.7 L217.1 484.9 L219.9 483.6 L222.6 480.8 L225.3 491.8 L228.1 497.3 L230.1 497.9 L235.6 505.5 L240.4 502.7 L243.2 504.8 L247.9 501.4 L251.4 500.7 L255.5 498.6 L259.6 495.9 L262.3 502.7 L266.4 501.4 L271.9 508.2 L278.1 504.1 L282.9 497.9 L287.7 494.5 L291.8 502.1 L295.9 498.6 L299.3 497.9 L303.4 493.2 L308.2 490.4 L313.7 485.6 L317.8 487 L321.2 483.6 L324 485.6 L328.8 478.8 L333.6 472.6 L337.7 480.8 L340.4 479.5 L343.2 473.3 L347.3 485.6 L352.1 479.5 L357.5 474 L360.3 478.8 L367.1 471.9 L372.6 465.1 L375.3 458.9 L380.8 449.3 L387 443.8 L392.5 437.7 L395 435.9 L397.7 431.1 L400.5 429.7 L403.2 424.2 L406 430.4 L408.7 441.4 L411.4 440 L414.9 434.5 L416.9 433.2 L419.7 427 L423.1 424.2 L425.8 419.5 L427.9 418.1 L430.6 411.2 L432.7 409.9 L436.1 402.3 L438.2 414 L440.2 413.3 L443.6 403.7 L446.4 414.7 L451.2 433.8 L455.3 429 L458.7 426.3 L463.5 418.1 L466.9 411.9 L469.7 409.9 L472.8 401.6 L476.5 418.1 L479.2 416.7 L482.7 408.5 L487.5 399.6 L490.2 396.8 L493 386.6 L496.4 381.1 L500.5 396.2 L503.2 394.8 L506 390 L508.7 388 L511.4 381.8 L514.9 378.4 L516.9 382.5 L519 380.4 L522.1 370.1 L525.8 395.5 L527.2 396.2 L529.9 403 L534.7 390 L537.5 387.3 L540.5 376.3 L544.3 396.8 L547.7 396.2 L551.2 384.5 L553.2 397.5 L556.6 379.7 L558.7 377.7 L560.8 386.6 L563.5 383.8 L566 371.5 L568.3 383.8 L571 381.8 L573.8 372.9 L577.2 368.1 L579.2 374.2 L582.7 407.1 L586.1 422.2 L589.5 420.1 L592.7 415.2 L596.8 407.7 L599.6 405.6 L602.3 398.8 L606.2 394.7 L609.9 410.4 L612.6 408.4 L615.3 401.5 L618.1 398.8 L621.5 391.2 L623.6 389.2 L626.3 376.8 L629.7 396.7 L632.5 394.7 L635.9 382.3 L637.9 380.3 L641 367.3 L644.8 394.7 L646.8 394 L649.9 383 L653.7 402.2 L655.8 400.8 L659.2 392.6 L661.2 391.2 L664.7 381.6 L666.7 394 L669.5 391.2 L672.2 383 L674.9 380.3 L677.7 365.2 L680.4 361.1 L682.9 352.2 L686.6 378.2 L689.3 376.8 L692.1 367.9 L694.1 378.2 L696.8 376.8 L699.6 368.6 L702.1 366.6 L704.8 355.3 L708.5 377.5 L711.2 376.2 L714 370.7 L716 385.8 L719.5 384.4 L721.5 376.8 L723.6 383 L725.6 382.3 L728.4 374.8 L732.5 370.7 L735.2 364.5 L738 361.8 L740.7 352.9 L742.7 350.8 L745.1 340.5 L747.5 349.5 L749.6 348.1 L752.6 335.8 L755.8 346 L759.9 367.9 L761.9 366.6 L764.7 357 L767.4 354.9 L770.8 344.7 L772.9 358.4 L774.9 357.7 L777.7 350.8 L779.7 359.7 L783.2 356.3 L785.2 359 L787.7 357.7 L790.8 352.9 L794.6 363.2 L797.3 361.8 L800.8 358.4 L802.8 357 L805.5 352.2 L809 350.8 L811.7 347.4 L813.8 346.7 L816.2 341.6 L818.6 350.1 L820.6 348.8 L823.4 341.2 L827.5 337.1 L829.5 340.5 L834.3 363.2 L836.4 363.8 L840.5 374.8 L845.3 367.3 L848 364.5 L851.4 357 L854.9 352.9 L856.9 359 L860.1 385.8 L863.1 383 L865.8 370.7 L867.2 383.7 L869.9 382.3 L873.4 375.5 L875.4 374.1 L878.8 367.3 L880.2 392.6 L882.9 389.9 L885.7 378.9 L887.7 378.2 L891.2 372.7 L894.6 382.3 L898 381 L900.8 377.5 L902.8 383 L905.5 382.3 L908.3 379.6 L910.3 383.7 L915.1 378.9 L917.2 381 L919.9 381 L923.4 376.2 L925.4 374.8 L928.2 369.3 L930.2 376.2 L935 372.7 L937.7 373.4 L942.5 368.6 L944.6 374.1 L947.3 372.1 L950.8 374.8 L955.5 368.6 L956.9 374.1 L959.7 373.4 L962.8 367.7 L965.1 374.1 L968.6 370.7 L970.6 366.6 L973.4 363.8 L975.4 354.9 L978.2 352.9 L980.9 345.3 L984.1 361.1 L988.2 376.8 L991 375.5 L993.7 368 L995.8 372.7 L997.8 372.1 L1000.8 364.5 L1002.6 382.3 L1005.3 380.3 L1008.1 369.3 L1010.8 367.3 L1013.6 354.9 L1015.6 362.5 L1018.4 360.4 L1021.1 353.6 L1023.8 352.2 L1026.6 343.6 L1028.6 348.1 L1031.4 346.7 L1034.1 341.9 L1037.5 358.4 L1041 355.6 L1044.7 348.8 L1047.1 358.4 L1052.6 385.8 L1057.4 402.2 L1063.6 398.1 L1066.3 396.7 L1069 394 L1073.8 389.9 L1077.9 399.2 L1081.4 396.7 L1086.2 387.8 L1089.6 386.4 L1093.7 376.8 L1095.8 384.4 L1099.2 383 L1101.6 378.9 L1104 383.7 L1106.7 382.3 L1109.5 377.5 L1111.5 376.2 L1114.2 370.7 L1117.7 379.6 L1121.1 378.2 L1123.8 374.8 L1127.3 373.4 L1130.7 378.9 L1132.7 378.9 L1135.9 375.5 L1140.3 384.4 L1145.1 380.3 L1147.8 383.7 L1151.2 381 L1154 378.9 L1158.1 375.5 L1160.1 382.3 L1163.6 379.6 L1166.3 376.2 L1168.4 374.8 L1171.1 370.7 L1175.9 389.9 L1177.1 389.3 L1179.8 385.9 L1181.8 387.9 L1183.9 403 L1186.6 401.6 L1189.4 396.2 L1191.4 401.6 L1193.5 400.3 L1196.9 394.8 L1199.7 393.4 L1202.1 387.3 L1204.5 403 L1207.2 414 L1209.9 412.6 L1212.7 408.5 L1214.7 414 L1217.5 412.6 L1220.9 408.5 L1222.9 407.1 L1225.7 402.3 L1229.1 414.7 L1231.8 414 L1235.3 410.5 L1238 409.9 L1240.5 405.1 L1242.1 420.8 L1246.2 429.7 L1251.7 424.9 L1256.5 422.9 L1261.3 429 L1266.1 425.6 L1269.5 423.6 L1273 420.8 L1277.1 418.1 L1282.5 412.6 L1285.3 411.2 L1288 407.1 L1290.8 415.3 L1293.5 422.9 L1296.2 421.5 L1299 419.5 L1301 422.2 L1304.5 420.1 L1308.6 412.6 L1310.6 411.2 L1313.4 409.9 L1316.1 402.3 L1318.8 398.9 L1321.6 392.7 L1324.3 388.6 L1326.4 386.6 L1328.2 379 L1329.8 387.9 L1332.5 386.6 L1335.3 379.7 L1338 386.6 L1340.1 407.1 L1343.5 405.8 L1346.5 398.9 L1348.3 407.8 L1351.7 405.1 L1353.8 399.6 L1357.2 398.2 L1359.9 396.2 L1363.4 393.4 L1366.8 403.7 L1370.2 400.3 L1372.7 395.3 L1374.8 394 L1377.5 385.8 L1380.3 383 L1383 374.1 L1386.4 391.9 L1389.2 390.5 L1391.9 381.6 L1394.7 378.9 L1397.4 366.6 L1402.9 398.1 L1405.6 396.7 L1408.4 386.4 L1411.1 383.7 L1413.8 373.4 L1417.9 394 L1421.4 404.2 L1424.1 402.9 L1426.6 398.1 L1430.3 411.8 L1433 410.4 L1436.4 405.6 L1439.2 404.9 L1441.2 401.5 L1444.7 407.7 L1447.4 409.7 L1449.5 408.4 L1452.5 402.2 L1454.9 410.4 L1457.9 428.2 L1460.4 426.2 L1463.2 416.6 L1465.9 414.5 L1468.6 408.4 L1472.1 404.9 L1474.8 409 L1476.8 407 L1479.6 396.7 L1483 391.9 L1485.8 398.1 L1487.8 396.7 L1490.5 386.4 L1494.7 407 L1497.4 404.9 L1499.5 396 L1502.2 394.7 L1505.3 389.6 L1507.7 394.7 L1509.7 393.3 L1512.5 385.8 L1515.2 383.7 L1517.9 378.9 L1520.7 376.2 L1523.4 364.5 L1527.5 367.3 L1529.6 365.9 L1533 359 L1535.1 363.2 L1537.1 361.8 L1539.9 354.9 L1542.6 352.9 L1545.3 344.7 L1552.9 370.7 L1555.6 369.3 L1558.4 364.5 L1561.1 363.2 L1563.8 357 L1565.9 361.8 L1568.7 358.8 L1572.3 354.2 L1576.9 346.5 L1578.7 356 L1581.4 356.9 L1586.9 376.1 L1589.7 374.3 L1593.3 361.5 L1597 358.8 L1600.6 377 L1604.3 372.5 L1607.9 365.2 L1611.6 353.3 L1614.3 349.6 L1617.1 341.4 L1619.8 347.8 L1623.5 341.4 L1627.1 337.8 L1629.9 329.5 L1632.6 326.8 L1635.4 318.6 L1638.1 315.8 L1640.5 304 L1644.5 326.8 L1647.2 325 L1650 318.6 L1652.7 324.1 L1657.3 313.1 L1660 311.3 L1663.7 302.1 L1668.3 292.1 L1671 290.3 L1673.7 283 L1676.5 290.3 L1680.5 273.8 L1684.7 304.9 L1686.5 302.1 L1691.1 283.9 L1692.9 283 L1695.7 262 L1699.3 277.5 L1704.8 266.5 L1706.6 276.6 L1712.1 258.3 L1715.8 288.1 L1718.5 285.7 L1721.2 271.1 L1724 268.4 L1726.7 254.7 L1729.5 251 L1732.2 237.3" fill="none" stroke="#f23645" stroke-width="2" stroke-linejoin="round" clip-path="url(#cb)"/>
</svg>
<svg class="a" style="left:0;top:0" width="1815" height="560"><rect x="18" y="513" width="9" height="4" fill="#0b574b"/><rect x="29" y="513" width="5" height="4" fill="#0b574b"/><rect x="36" y="513" width="11" height="4" fill="#0b574b"/><rect x="49" y="513" width="16" height="4" fill="#0b574b"/><rect x="66" y="513" width="206" height="4" fill="#81242f"/><rect x="273" y="513" width="130" height="4" fill="#0b574b"/><rect x="404" y="513" width="5" height="4" fill="#81242f"/><rect x="410" y="513" width="26" height="4" fill="#0b574b"/><rect x="437" y="513" width="14" height="4" fill="#81242f"/><rect x="452" y="513" width="21" height="4" fill="#0b574b"/><rect x="474" y="513" width="2" height="4" fill="#81242f"/><rect x="477" y="513" width="20" height="4" fill="#0b574b"/><rect x="498" y="513" width="2" height="4" fill="#81242f"/><rect x="501" y="513" width="14" height="4" fill="#0b574b"/><rect x="517" y="513" width="5" height="4" fill="#0b574b"/><rect x="523" y="513" width="6" height="4" fill="#81242f"/><rect x="530" y="513" width="47" height="4" fill="#0b574b"/><rect x="578" y="513" width="8" height="4" fill="#81242f"/><rect x="587" y="513" width="54" height="4" fill="#0b574b"/><rect x="642" y="513" width="12" height="4" fill="#81242f"/><rect x="655" y="513" width="28" height="4" fill="#0b574b"/><rect x="684" y="513" width="32" height="4" fill="#81242f"/><rect x="717" y="513" width="28" height="4" fill="#0b574b"/><rect x="747" y="513" width="5" height="4" fill="#0b574b"/><rect x="753" y="513" width="493" height="4" fill="#81242f"/><rect x="1247" y="513" width="394" height="4" fill="#0b574b"/><rect x="1642" y="513" width="2" height="4" fill="#81242f"/><rect x="1645" y="513" width="29" height="4" fill="#0b574b"/><rect x="1675" y="513" width="6" height="4" fill="#0b574b"/><rect x="1682" y="513" width="3" height="4" fill="#81242f"/><rect x="1686" y="513" width="10" height="4" fill="#0b574b"/><rect x="1697" y="513" width="2" height="4" fill="#81242f"/><rect x="1700" y="513" width="12" height="4" fill="#0b574b"/><rect x="1713" y="513" width="3" height="4" fill="#81242f"/><rect x="1717" y="513" width="15" height="4" fill="#0b574b"/></svg>

<div class="a" style="left:1741px;top:228px;width:61px;height:17px;background:#089981;border-radius:3px;color:#fff;font-size:12px;line-height:17px;text-align:right;padding-right:5px">200.92%</div>
<div class="ylab" style="top:289px">150.00%</div>
<div class="ylab" style="top:347px">100.00%</div>
<div class="ylab" style="top:406px">50.00%</div>
<div class="ylab" style="top:464px">0.00%</div>

<div class="xlab" style="left:16px">Jun</div>
<div class="xlab" style="left:111px">Aug</div>
<div class="xlab" style="left:209px">Oct</div>
<div class="xlab b" style="left:331px">2022</div>
<div class="xlab" style="left:437px">Mar</div>
<div class="xlab" style="left:516px">May</div>
<div class="xlab" style="left:598px">Jun</div>
<div class="xlab" style="left:698px">Aug</div>
<div class="xlab" style="left:826px">Nov</div>
<div class="xlab b" style="left:933px">2023</div>
<div class="xlab" style="left:1018px">Mar</div>
<div class="xlab" style="left:1145px">Jun</div>
<div class="xlab" style="left:1237px">Sep</div>
<div class="xlab b" style="left:1388px">2024</div>
<div class="xlab" style="left:1483px">Apr</div>
<div class="xlab" style="left:1571px">Jun</div>
<div class="xlab" style="left:1674px">Aug</div>

<!-- checkboxes -->
<div class="a" style="left:16px;top:560px;width:18px;height:18px;border:1px solid #e2e2e2;border-radius:4px"></div>
<div class="a" style="left:42px;top:561px;font-size:14px;line-height:16px">Buy &amp; hold</div>
<div class="a" style="left:142px;top:560px;width:18px;height:18px;border:1px solid #e2e2e2;border-radius:4px"></div>
<div class="a" style="left:168px;top:561px;font-size:14px;line-height:16px">Trades excursions</div>
<div class="a" style="left:1634px;top:561px;font-size:14px;line-height:16px">Absolute</div>
<div class="a b" style="left:1704px;top:555px;width:91px;height:28px;border-radius:6px;background:#2e2e2e;color:#fff;font-size:14px;line-height:28px;text-align:center">Percentage</div>

<!-- performance -->
<div class="a" style="left:16px;top:627px;width:1783px;height:300px;border:1px solid #3a3a3a;border-radius:12px"></div>
<svg class="a" style="left:35px;top:648px" width="14" height="12" viewBox="0 0 14 12"><path d="M2 3.5l5 5 5-5" fill="none" stroke="#dbdbdb" stroke-width="1.8"/></svg>
<div class="a b" style="left:59px;top:644px;font-size:18px;line-height:21px">Performance</div>

<div class="a b" style="left:33px;top:693px;font-size:14px;line-height:16px">Profit structure</div>

<div class="gl" style="left:33px;top:729px;width:796px"></div>
<div class="gl" style="left:33px;top:771px;width:796px"></div>
<div class="gl" style="left:33px;top:813px;width:796px"></div>
<div class="gl" style="left:33px;top:854px;width:796px"></div>
<div class="a" style="left:831px;width:60px;top:723px;font-size:11.5px;line-height:14px;text-align:right;color:#c8c8c8">1.80 M</div>
<div class="a" style="left:831px;width:60px;top:764px;font-size:11.5px;line-height:14px;text-align:right;color:#c8c8c8">1.35 M</div>
<div class="a" style="left:831px;width:60px;top:804px;font-size:11.5px;line-height:14px;text-align:right;color:#c8c8c8">900.00 K</div>
<div class="a" style="left:831px;width:60px;top:845px;font-size:11.5px;line-height:14px;text-align:right;color:#c8c8c8">450.00 K</div>
<div class="a" style="left:103px;top:745px;width:60px;height:140px;background:#089981"></div>
<div class="a" style="left:302px;top:745px;width:60px;height:127px;background:#f23645"></div>
<div class="a" style="left:501px;top:871px;width:60px;height:20px;background:#ff9800"></div>
<svg class="a" style="left:0;top:700px" width="900" height="176"><path d="M163 45.5H302M362 171.5H501" stroke="#9a9a9a" stroke-width="1" stroke-dasharray="3 2"/></svg>


<div class="a b" style="left:924px;top:693px;font-size:14px;line-height:16px">Benchmarking</div>

<div class="a" style="left:1720px;top:723px;font-size:11px;line-height:14px;color:#c8c8c8">300.00%</div>
<div class="a" style="left:1720px;top:757px;font-size:11px;line-height:14px;color:#c8c8c8">200.00%</div>
<div class="a" style="left:1720px;top:791px;font-size:11px;line-height:14px;color:#c8c8c8">100.00%</div>
<div class="a" style="left:1720px;top:825px;font-size:11px;line-height:14px;color:#c8c8c8">0.00%</div>
<div class="a" style="left:1720px;top:859px;font-size:11px;line-height:14px;color:#c8c8c8">&minus;100.00%</div>
<svg class="a" style="left:900px;top:700px" width="915" height="176" viewBox="900 700 915 176">
<path d="M1249 826L1316.5 832L1249 861Z" fill="#2e2111"/>
<path d="M1316.5 832L1383 764L1383 842Z" fill="#182a4a"/>
<path d="M924 730.5H1710M924 764.5H1710M924 798.5H1710M924 866.5H1710" stroke="#2a2a2a" stroke-width="1"/>
<rect x="990" y="826" width="259" height="35" rx="4" fill="#8a5207"/>
<rect x="990" y="832.5" width="259" height="20.5" fill="#ff9800"/>
<rect x="1383" y="764" width="259" height="78" rx="4" fill="#234285"/>
<rect x="1383" y="764" width="259" height="68" rx="4" fill="#3179f5"/>
<rect x="1383" y="800" width="20" height="32" fill="#3179f5"/>
<path d="M924 832.5H1710" stroke="#8c8c8c" stroke-width="1"/>
<path d="M1249 826L1316.5 832M1249 861L1316.5 832" stroke="#ff9800" stroke-width="1" stroke-dasharray="3 2"/>
<path d="M1316.5 832L1383 764M1316.5 832L1383 842" stroke="#2f7bf5" stroke-width="1" stroke-dasharray="3 2"/>
<circle cx="1316.5" cy="832" r="3.5" fill="#8c8c8c"/>
<rect x="1129" y="817" width="55" height="17.5" rx="1.5" fill="#e0801e"/>
<rect x="1185" y="817" width="64" height="17.5" rx="1.5" fill="#e0801e"/>
<rect x="1129" y="844" width="55" height="17.5" rx="1.5" fill="#c86f18"/>
<rect x="1185" y="844" width="64" height="17.5" rx="1.5" fill="#c86f18"/>
<rect x="1129" y="862" width="55" height="17.5" rx="1.5" fill="#e0801e"/>
<rect x="1185" y="862" width="64" height="17.5" rx="1.5" fill="#e0801e"/>
<rect x="1383" y="737" width="55" height="18" rx="1.5" fill="#3179f5"/>
<rect x="1439" y="737" width="64" height="18" rx="1.5" fill="#3179f5"/>
<rect x="1383" y="755" width="55" height="18" rx="1.5" fill="#1f53e3"/>
<rect x="1439" y="755" width="64" height="18" rx="1.5" fill="#1f53e3"/>
<rect x="1383" y="833" width="55" height="18" rx="1.5" fill="#3179f5"/>
<rect x="1439" y="833" width="64" height="18" rx="1.5" fill="#3179f5"/>
</svg>
<div class="a" style="left:1135px;top:817px;width:50px;font-size:13px;line-height:17px;color:#fff;text-align:left">Max</div><div class="a" style="left:1185px;top:817px;width:58px;font-size:13px;line-height:17px;color:#fff;text-align:right">16.68%</div><div class="a" style="left:1135px;top:844px;width:50px;font-size:13px;line-height:17px;color:#fff;text-align:left">Current</div><div class="a" style="left:1185px;top:844px;width:58px;font-size:13px;line-height:17px;color:#fff;text-align:right">&minus;62.20%</div><div class="a" style="left:1135px;top:862px;width:50px;font-size:13px;line-height:17px;color:#fff;text-align:left">Min</div><div class="a" style="left:1185px;top:862px;width:58px;font-size:13px;line-height:17px;color:#fff;text-align:right">&minus;86.59%</div><div class="a" style="left:1389px;top:737px;width:50px;font-size:13px;line-height:17px;color:#fff;text-align:left">Max</div><div class="a" style="left:1439px;top:737px;width:58px;font-size:13px;line-height:17px;color:#fff;text-align:right">200.92%</div><div class="a" style="left:1389px;top:755px;width:50px;font-size:13px;line-height:17px;color:#fff;text-align:left">Current</div><div class="a" style="left:1439px;top:755px;width:58px;font-size:13px;line-height:17px;color:#fff;text-align:right">200.92%</div><div class="a" style="left:1389px;top:833px;width:50px;font-size:13px;line-height:17px;color:#fff;text-align:left">Min</div><div class="a" style="left:1439px;top:833px;width:58px;font-size:13px;line-height:17px;color:#fff;text-align:right">&minus;30.98%</div>

</body></html>
